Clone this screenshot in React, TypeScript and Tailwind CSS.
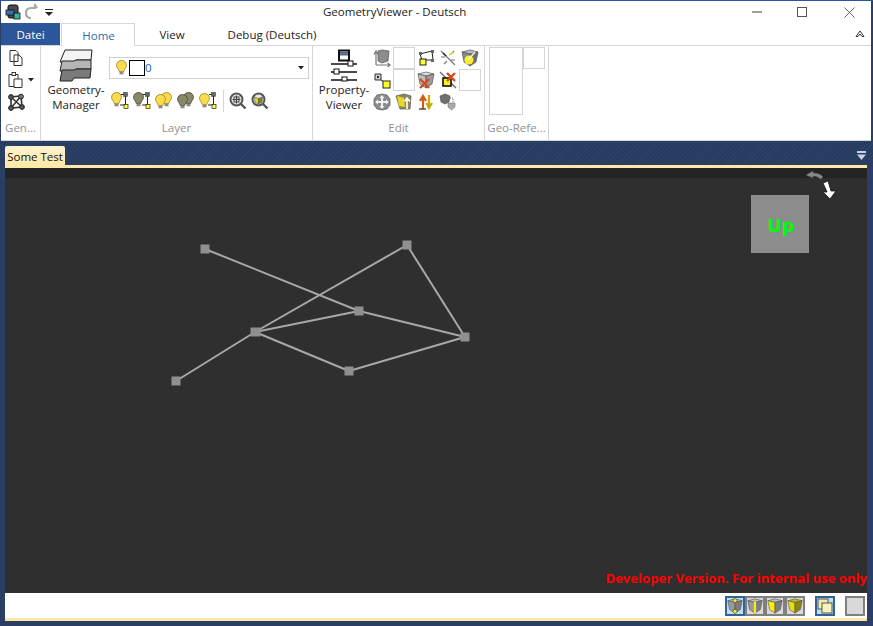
const font = "font-['Open_Sans',sans-serif]";

// small shapes shared by the toolbar icons
function Bulb({ x = 0, y = 0, dark = false }: { x?: number; y?: number; dark?: boolean }) {
  const fill = dark ? "#8a8668" : "#f9dc4e";
  const edge = dark ? "#55533f" : "#a58a22";
  return (
    <g transform={`translate(${x} ${y}) scale(1.1)`}>
      <path d="M5 0.5C2.3 0.5 0.5 2.4 0.5 4.8C0.5 7 2.4 8 3 10.5H7C7.6 8 9.5 7 9.5 4.8C9.5 2.4 7.7 0.5 5 0.5Z" fill={fill} stroke={edge} strokeWidth="0.8" />
      <rect x="3.2" y="10.8" width="3.6" height="2.2" fill="#8a8a8a" />
    </g>
  );
}

function Link() {
  return (
    <g>
      <path d="M10 2.5H14.5V13H9" fill="none" stroke="#222" />
      <rect x="12.5" y="0.5" width="4" height="4" fill="#666" stroke="#333" strokeWidth="0.5" />
      <rect x="13" y="12.5" width="4" height="4" fill="#ffff33" stroke="#222" strokeWidth="0.7" />
    </g>
  );
}

function Cube({ left = "#9a9a9a", right = "#7d7d7d", top = "#bdbdbd" }: { left?: string; right?: string; top?: string }) {
  return (
    <g stroke="#555" strokeWidth="0.7">
      <path d="M1 3L9 1L17 3L9 5Z" fill={top} />
      <path d="M1 3L9 5V17L3 13Z" fill={left} />
      <path d="M17 3L9 5V17L15 13Z" fill={right} />
    </g>
  );
}

function Magnifier({ children }: { children?: React.ReactNode }) {
  return (
    <svg width="18" height="18" viewBox="0 0 18 18">
      <path d="M11 11L16.5 16.5" stroke="#555" strokeWidth="2.4" />
      <circle cx="7.5" cy="7.5" r="6" fill="#e8e8e8" stroke="#555" strokeWidth="2" />
      {children}
    </svg>
  );
}

function Ico({ children }: { children: React.ReactNode }) {
  return (
    <svg width="18" height="18" viewBox="0 0 18 18">
      {children}
    </svg>
  );
}

function Cell({ children }: { children?: React.ReactNode }) {
  return <div className="flex h-[22px] w-[22px] items-center justify-center">{children}</div>;
}

function EmptyBox() {
  return <div className="h-[22px] w-[22px] border border-[#d4d4d4]" />;
}

function GroupLabel({ children }: { children: React.ReactNode }) {
  return <div className="absolute inset-x-0 bottom-[4px] text-center text-[11.5px] leading-[16px] text-[#8f8f8f]">{children}</div>;
}

function RibbonGroup({ width, label, children }: { width: string; label: string; children: React.ReactNode }) {
  return (
    <div className={`relative h-[94px] border-r border-[#d6d6d6] ${width}`}>
      {children}
      <GroupLabel>{label}</GroupLabel>
    </div>
  );
}

function ClipboardGroup() {
  return (
    <RibbonGroup width="w-[40px]" label="Gen...">
      <div className="flex flex-col items-start pl-[4px] pt-[1px]">
        <Cell>
          <Ico>
            <path d="M3 1.5H9L11 3.5V12.5H3Z M7 6H12L15 9V16.5H7Z" fill="#fff" stroke="#333" />
          </Ico>
        </Cell>
        <div className="flex h-[22px] items-center">
          <Cell>
            <Ico>
              <path d="M2 3.5H11V15.5H2Z" fill="#fff" stroke="#333" />
              <rect x="5" y="1.5" width="3.5" height="3" fill="#fff" stroke="#333" />
              <path d="M7 8H15V16.5H7Z" fill="#fff" stroke="#333" />
            </Ico>
          </Cell>
          <svg width="6" height="4" viewBox="0 0 6 4" className="ml-px">
            <path d="M0 0H6L3 3.5Z" fill="#222" />
          </svg>
        </div>
        <Cell>
          <Ico>
            <path d="M4 4L14 3L15 14L4 15Z M4 4L15 14 M14 3L4 15" fill="none" stroke="#333" strokeWidth="1.6" />
            <circle cx="4" cy="4" r="2.4" fill="#555" stroke="#222" />
            <circle cx="14" cy="3.6" r="2.4" fill="#777" stroke="#222" />
            <circle cx="15" cy="14" r="2.4" fill="#555" stroke="#222" />
            <circle cx="4" cy="15" r="2.4" fill="#555" stroke="#222" />
          </Ico>
        </Cell>
      </div>
    </RibbonGroup>
  );
}

function LayerGroup() {
  return (
    <RibbonGroup width="w-[272px]" label="Layer">
      <div className="flex">
        <div className="flex w-[67px] flex-col items-center pl-[3px] pt-[3px]">
          <svg width="34" height="33" viewBox="0 0 34 33">
            <path d="M6 1H33L32 11H17L15 13H1Z" fill="#f4f4f4" stroke="#222" />
            <path d="M3 12H15L17 11H32L32 20H17L15 22H1Z" fill="#b5b5b5" stroke="#222" />
            <path d="M3 21H15L17 20H32L31 29H15L13 32H1Z" fill="#7a7a7a" stroke="#222" />
          </svg>
          <div className="whitespace-nowrap text-center text-[11.5px] leading-[15px] text-[#222]">
            Geometry-
            <br />
            Manager
          </div>
        </div>
        <div className="pl-[1px] pt-[11px]">
          <div className="flex h-[22px] w-[200px] items-center border border-[#cfcfcf] pl-[4px] pr-[3px]">
            <Ico>
              <Bulb x={2} y={1} />
            </Ico>
            <div className="ml-[-3px] h-[16px] w-[16px] border border-black bg-white" />
            <span className="text-[11.5px] leading-none text-[#1a5fb4]">0</span>
            <svg width="6" height="4" viewBox="0 0 6 4" className="ml-auto mr-[1px]">
              <path d="M0 0H6L3 3.5Z" fill="#222" />
            </svg>
          </div>
          <div className="mt-[11px] flex items-center">
            <Cell>
              <Ico>
                <Bulb />
                <Link />
              </Ico>
            </Cell>
            <Cell>
              <Ico>
                <Bulb dark />
                <Link />
              </Ico>
            </Cell>
            <Cell>
              <Ico>
                <Bulb x={6} y={0} />
                <Bulb x={0} y={2} />
              </Ico>
            </Cell>
            <Cell>
              <Ico>
                <Bulb x={6} y={0} dark />
                <Bulb x={0} y={2} dark />
              </Ico>
            </Cell>
            <Cell>
              <Ico>
                <Bulb y={1} />
                <Link />
              </Ico>
            </Cell>
            <div className="ml-[4px] mr-[3px] h-[22px] w-px bg-[#d6d6d6]" />
            <Cell>
              <Magnifier>
                <path d="M7.5 3.5V11.5M3.5 7.5H11.5" stroke="#444" strokeWidth="1.2" />
                <rect x="5" y="5" width="5" height="5" fill="none" stroke="#444" />
              </Magnifier>
            </Cell>
            <Cell>
              <Magnifier>
                <path d="M3.5 5L7.5 6.5V12L4 10Z" fill="#e8d820" stroke="#444" strokeWidth="0.5" />
                <path d="M11.5 5L7.5 6.5V12L11 10Z" fill="#8a8214" stroke="#444" strokeWidth="0.5" />
              </Magnifier>
            </Cell>
          </div>
        </div>
      </div>
    </RibbonGroup>
  );
}

function EditGroup() {
  return (
    <RibbonGroup width="w-[172px]" label="Edit">
      <div className="flex">
        <div className="flex w-[58px] flex-col items-center pl-[4px] pt-[3px]">
          <svg width="28" height="33" viewBox="0 0 28 33">
            <rect x="9" y="1.5" width="10" height="10" fill="#fff" stroke="#111" strokeWidth="2" />
            <rect x="10" y="2.5" width="8" height="4" fill="#5c6d8a" />
            <path d="M1 15H27M1 23H27M1 31H27" stroke="#111" strokeWidth="1.4" />
            <rect x="18" y="12" width="5" height="5" fill="#fff" stroke="#111" />
            <rect x="4" y="20" width="5" height="5" fill="#fff" stroke="#111" />
            <rect x="12" y="28" width="5" height="4" fill="#fff" stroke="#111" />
          </svg>
          <div className="whitespace-nowrap text-center text-[11.5px] leading-[15px] text-[#222]">
            Property-
            <br />
            Viewer
          </div>
        </div>
        <div className="grid grid-cols-[repeat(5,22px)] grid-rows-[repeat(3,22px)] pt-[1px]">
          <Cell>
            <Ico>
              <path d="M5 2L9 1L16 2L15 12L9 14L5 12Z" fill="#8c8c8c" stroke="#555" strokeWidth="0.7" />
              <path d="M3 16V3M1 5.5L3 2L5 5.5M3 16H17M14.5 14L17 16L14.5 18" fill="none" stroke="#777" strokeWidth="1.2" />
            </Ico>
          </Cell>
          <EmptyBox />
          <Cell>
            <Ico>
              <path d="M5 11L3 5L15 2L16 11Z" fill="none" stroke="#222" />
              <rect x="2" y="3" width="3" height="3" fill="#666" />
              <rect x="14" y="1" width="3" height="3" fill="#666" />
              <rect x="14" y="10" width="3" height="3" fill="#666" />
              <rect x="3" y="10" width="6" height="6" fill="#ffff33" stroke="#222" />
            </Ico>
          </Cell>
          <Cell>
            <Ico>
              <path d="M2 2L16 16M5 15L8 12M12 5L15 2M2 8H6M12 11H16" stroke="#777" strokeWidth="1.2" />
              <path d="M10 6L14 3" stroke="#e6d820" strokeWidth="1.4" />
              <path d="M4 4L7 7" stroke="#222" strokeWidth="1.2" />
            </Ico>
          </Cell>
          <Cell>
            <Ico>
              <Cube left="#8a8a8a" right="#6f6f6f" />
              <circle cx="8" cy="11" r="4.5" fill="#ffee22" />
              <path d="M14 3L7 11" stroke="#eee" strokeWidth="1.6" />
            </Ico>
          </Cell>
          <Cell>
            <Ico>
              <path d="M2 3H8V9H2Z" fill="#ccc" stroke="#333" />
              <rect x="4" y="5" width="2" height="2" fill="#333" />
              <path d="M8 9L11 11" stroke="#222" />
              <rect x="10" y="10" width="7" height="7" fill="#ffff22" stroke="#222" />
            </Ico>
          </Cell>
          <EmptyBox />
          <Cell>
            <Ico>
              <Cube left="#bdbdbd" right="#9c9c9c" top="#dedede" />
              <path d="M3 8L12 17M12 8L3 17" stroke="#d8481c" strokeWidth="2.4" />
            </Ico>
          </Cell>
          <Cell>
            <Ico>
              <path d="M1 1L17 17" stroke="#666" strokeWidth="1.2" />
              <rect x="4" y="7" width="8" height="8" fill="#ffee22" stroke="#111" strokeWidth="1.6" />
              <path d="M8 2L16 10M16 2L8 10" stroke="#d8481c" strokeWidth="2.4" />
            </Ico>
          </Cell>
          <EmptyBox />
          <Cell>
            <Ico>
              <path d="M4 2L9 1L14 2L17 6V12L14 16L9 17L4 16L1 12V6Z" fill="#8c8c8c" stroke="#444" strokeWidth="0.6" />
              <path d="M9 2L11.5 5H10V8H13V6.5L16 9L13 11.5V10H10V13H11.5L9 16L6.5 13H8V10H5V11.5L2 9L5 6.5V8H8V5H6.5Z" fill="#f2f2f2" />
            </Ico>
          </Cell>
          <Cell>
            <Ico>
              <path d="M1 3L9 1L16 3L15 16H5Z" fill="#8c8a58" stroke="#555" strokeWidth="0.7" />
              <path d="M2 3L9 5L10 14L4 13Z" fill="#e8d820" />
              <path d="M12 16V6M9.5 8.5L12 5L15 8.5" fill="none" stroke="#fff" strokeWidth="1.6" />
            </Ico>
          </Cell>
          <Cell>
            <Ico>
              <path d="M6 16V5M3 8L6 3L9 8" fill="none" stroke="#d8581c" strokeWidth="2.2" />
              <path d="M12 2V13M9.5 10L12 15L15 10" fill="none" stroke="#c9a800" strokeWidth="2.2" />
              <path d="M2 16H9" stroke="#444" strokeWidth="1.4" />
            </Ico>
          </Cell>
          <Cell>
            <Ico>
              <path d="M1 3L6 1L11 3L10 9L6 11L2 9Z" fill="#6f6f6f" stroke="#444" strokeWidth="0.6" />
              <path d="M11 5H14V9" fill="none" stroke="#777" strokeDasharray="1 1" />
              <path d="M9 10H16V14L12.5 17L9 14Z" fill="#aaa" stroke="#777" strokeWidth="0.6" />
            </Ico>
          </Cell>
        </div>
      </div>
    </RibbonGroup>
  );
}

function GeoGroup() {
  return (
    <RibbonGroup width="w-[64px]" label="Geo-Refe...">
      <div className="flex items-start pl-[4px] pt-[1px]">
        <div className="h-[68px] w-[34px] border border-[#d4d4d4]" />
        <div className="h-[22px] w-[22px] border border-[#d4d4d4]" />
      </div>
    </RibbonGroup>
  );
}

function Graph() {
  const nodes = [
    [205, 248],
    [407, 244],
    [359, 310],
    [255, 331],
    [465, 336],
    [349, 370],
    [176, 380],
  ];
  const edges = [
    [0, 2],
    [2, 4],
    [3, 2],
    [3, 1],
    [1, 4],
    [3, 5],
    [5, 4],
    [6, 3],
  ];
  // node coordinates are page coordinates, shifted to the canvas by the viewBox
  return (
    <svg width="862" height="415" viewBox="5 177 862 415" className="absolute inset-0">
      {edges.map(([a, b], i) => (
        <line key={i} x1={nodes[a][0]} y1={nodes[a][1]} x2={nodes[b][0]} y2={nodes[b][1]} stroke="#a8a8a8" strokeWidth="2" />
      ))}
      {nodes.map(([x, y], i) => (
        <rect key={i} x={x - 4.5} y={y - 4.5} width={i === 3 ? 10 : 9} height="9" fill="#909090" />
      ))}
    </svg>
  );
}

function NavCube() {
  return (
    <>
      <svg width="34" height="34" viewBox="0 0 34 34" className="absolute right-[30px] top-[-9px]">
        <path d="M3 6L10 2V4C14 4 18 5 20 8L17.5 10C15 8 13 7 10 7V9Z" fill="#8a8a8a" stroke="#555" strokeWidth="0.5" />
        <path d="M20 14L25 12L28 22H33L27 30L20 23H24Z" fill="#fff" stroke="#111" strokeWidth="0.8" />
      </svg>
      <div className="absolute right-[58px] top-[17px] flex h-[58px] w-[58px] items-center justify-center bg-[#8c8c8c] pl-[2px] pt-[3px]">
        <span className="font-['DejaVu_Sans',sans-serif] text-[18px] font-bold leading-none text-[#00ff00]">Up</span>
      </div>
    </>
  );
}

function ViewButton({ selected = false, children }: { selected?: boolean; children?: React.ReactNode }) {
  return (
    <div
      className={`flex h-[20px] w-[20px] items-center justify-center border-2 ${
        selected ? "border-[#2f6496] bg-[#c4dcef]" : "border-[#808080] bg-[#d9d9d9]"
      }`}
    >
      {children}
    </div>
  );
}

function StatusBar() {
  return (
    <div className="flex h-[25px] items-center justify-end bg-white pr-[2px]">
      <ViewButton selected>
        <svg width="16" height="16" viewBox="0 0 18 18">
          <Cube />
          <circle cx="9" cy="3" r="2.2" fill="#ffee22" stroke="#333" strokeWidth="0.6" />
          <circle cx="9" cy="15" r="2.2" fill="#ffee22" stroke="#333" strokeWidth="0.6" />
        </svg>
      </ViewButton>
      <ViewButton>
        <svg width="16" height="16" viewBox="0 0 18 18">
          <Cube />
          <path d="M9 4V17" stroke="#ffee00" strokeWidth="2.4" />
        </svg>
      </ViewButton>
      <ViewButton>
        <svg width="16" height="16" viewBox="0 0 18 18">
          <Cube left="#ffee00" />
        </svg>
      </ViewButton>
      <ViewButton>
        <svg width="16" height="16" viewBox="0 0 18 18">
          <Cube left="#e8dc10" right="#8a8214" top="#c4ba12" />
        </svg>
      </ViewButton>
      <div className="w-[10px]" />
      <ViewButton selected>
        <svg width="16" height="16" viewBox="0 0 16 16">
          <rect x="1" y="1" width="10" height="10" fill="#f0ecaa" stroke="#555" />
          <rect x="5" y="5" width="10" height="10" fill="#f6f2bc" stroke="#555" />
        </svg>
      </ViewButton>
      <div className="w-[10px]" />
      <ViewButton />
    </div>
  );
}

export default function App() {
  return (
    <div className={`flex h-[626px] w-[873px] flex-col overflow-hidden bg-[#2a3f63] text-[11.5px] ${font}`}>
      <div className="border-t border-[#2b579a]" />
      <div className="ml-px mr-[2px] bg-white">
        {/* title bar */}
        <div className="flex h-[22px] items-center">
          <div className="flex w-[322px] items-center pl-[4px]">
            <svg width="16" height="16" viewBox="0 0 16 16">
              <rect x="3" y="1" width="10" height="13" rx="2" fill="#4a4a4a" stroke="#111" />
              <rect x="1" y="6" width="8" height="5" fill="#3c6fb4" stroke="#111" strokeWidth="0.8" />
              <rect x="9" y="9" width="6" height="6" fill="#34b4a0" stroke="#111" strokeWidth="0.8" />
            </svg>
            <svg width="16" height="16" viewBox="0 0 16 16" className="ml-[3px]">
              <path d="M13 4L11 1V4H7C4 4 2 6 2 9C2 12 4 14 7 14" fill="none" stroke="#a8a8a8" strokeWidth="2.2" />
            </svg>
            <svg width="8" height="7" viewBox="0 0 8 7" className="ml-[5px]">
              <path d="M0 0H8V1H0ZM0 3H8L4 7Z" fill="#222" />
            </svg>
          </div>
          <div className="whitespace-nowrap text-[#222]">GeometryViewer - Deutsch</div>
          <div className="ml-auto flex items-center">
            <div className="mr-[35px] h-[1px] w-[10px] border-t-2 border-[#a0a0a0]" />
            <div className="mr-[37px] h-[10px] w-[10px] border border-[#555]" />
            <svg width="11" height="11" viewBox="0 0 11 11" className="mr-[16px]">
              <path d="M0.5 0.5L10.5 10.5M10.5 0.5L0.5 10.5" stroke="#666" />
            </svg>
          </div>
        </div>
        {/* tabs */}
        <div className="flex h-[23px] border-b border-[#d6d6d6]">
          <div className="flex w-[59px] items-center justify-center bg-[#2b579a] pt-px text-white">Datei</div>
          <div className="mb-[-1px] ml-px flex w-[74px] items-center justify-center border border-b-0 border-[#d6d6d6] bg-white pl-[1px] pt-px text-[#2b6cb0]">
            Home
          </div>
          <div className="flex w-[74px] items-center justify-center pt-px text-[#222]">View</div>
          <div className="flex w-[126px] items-center justify-center pt-px text-[#222]">Debug (Deutsch)</div>
          <svg width="10" height="8" viewBox="0 0 10 8" className="ml-auto mr-[6px] self-center">
            <path d="M1 6.5L5 1L9 6.5L7 6.5L5 4L3 6.5Z" fill="none" stroke="#333" />
          </svg>
        </div>
        {/* ribbon */}
        <div className="flex h-[95px] border-b border-[#d6d6d6]">
          <ClipboardGroup />
          <LayerGroup />
          <EditGroup />
          <GeoGroup />
        </div>
      </div>

      {/* document tab strip */}
      <div className="flex h-[24px] items-end justify-between bg-[repeating-linear-gradient(135deg,#2c4269_0,#2c4269_1px,#283c60_1px,#283c60_3px)] px-[5px]">
        <div className="flex h-[19px] w-[60px] items-center justify-center rounded-t-[2px] bg-[linear-gradient(#fff3d0,#ffe7a8)] pt-[2px] text-[#111]">
          Some Test
        </div>
        <svg width="9" height="9" viewBox="0 0 9 9" className="mb-[5px] mr-[2px]">
          <path d="M0 0H9V2H0ZM0 3.5H9L4.5 9Z" fill="#c9d2e2" />
        </svg>
      </div>

      {/* document body */}
      <div className="ml-[5px] mr-[6px] flex h-[456px] flex-col">
        <div className="h-[3px] bg-[#ffe7a8]" />
        <div className="h-[10px] bg-[#232323]" />
        <div className="relative flex h-[415px] items-end justify-end bg-[#2f2f2f]">
          <Graph />
          <NavCube />
          <span className="relative mb-[8px] text-[13.1px] font-bold leading-none text-[#ff0000]">
            Developer Version. For internal use only
          </span>
        </div>
        <StatusBar />
        <div className="h-[3px] bg-[#ffe7a8]" />
      </div>
    </div>
  );
}
